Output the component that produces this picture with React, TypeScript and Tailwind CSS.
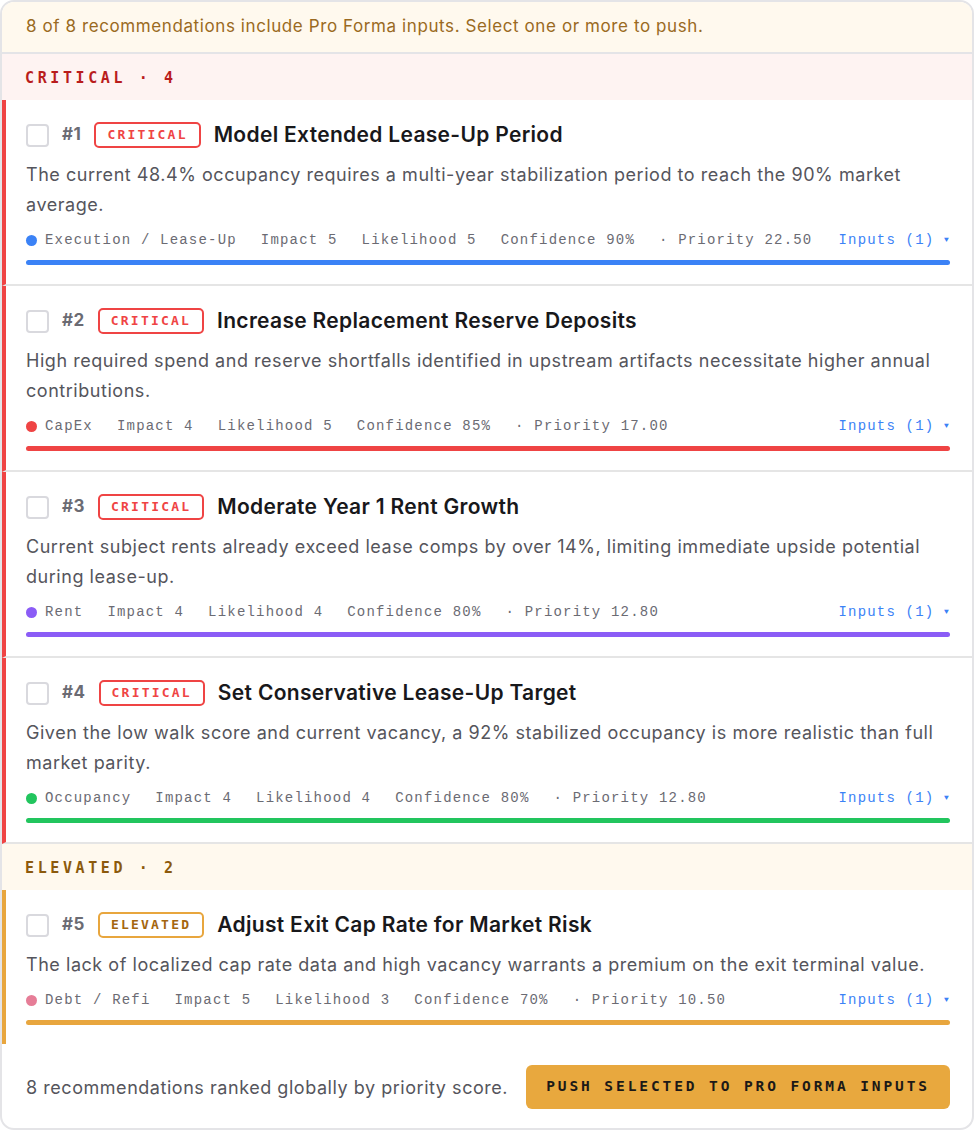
import React from 'react';

const sans = "font-['Inter','Noto_Sans',sans-serif]";
const mono = "font-['Liberation_Mono','DejaVu_Sans_Mono',monospace]";
const monoBold = "font-['DejaVu_Sans_Mono','Liberation_Mono',monospace]";

type Rec = {
  n: number;
  level: 'critical' | 'elevated';
  title: string;
  desc: string;
  category: string;
  dot: string;
  bar: string;
  impact: number;
  likelihood: number;
  confidence: number;
  priority: string;
};

const recs: Rec[] = [
  {
    n: 1,
    level: 'critical',
    title: 'Model Extended Lease-Up Period',
    desc: 'The current 48.4% occupancy requires a multi-year stabilization period to reach the 90% market average.',
    category: 'Execution / Lease-Up',
    dot: 'bg-[#3b82f6]',
    bar: 'bg-[#3b82f6]',
    impact: 5,
    likelihood: 5,
    confidence: 90,
    priority: '22.50',
  },
  {
    n: 2,
    level: 'critical',
    title: 'Increase Replacement Reserve Deposits',
    desc: 'High required spend and reserve shortfalls identified in upstream artifacts necessitate higher annual contributions.',
    category: 'CapEx',
    dot: 'bg-[#ef4444]',
    bar: 'bg-[#ef4444]',
    impact: 4,
    likelihood: 5,
    confidence: 85,
    priority: '17.00',
  },
  {
    n: 3,
    level: 'critical',
    title: 'Moderate Year 1 Rent Growth',
    desc: 'Current subject rents already exceed lease comps by over 14%, limiting immediate upside potential during lease-up.',
    category: 'Rent',
    dot: 'bg-[#8b5cf6]',
    bar: 'bg-[#8b5cf6]',
    impact: 4,
    likelihood: 4,
    confidence: 80,
    priority: '12.80',
  },
  {
    n: 4,
    level: 'critical',
    title: 'Set Conservative Lease-Up Target',
    desc: 'Given the low walk score and current vacancy, a 92% stabilized occupancy is more realistic than full market parity.',
    category: 'Occupancy',
    dot: 'bg-[#22c55e]',
    bar: 'bg-[#22c55e]',
    impact: 4,
    likelihood: 4,
    confidence: 80,
    priority: '12.80',
  },
  {
    n: 5,
    level: 'elevated',
    title: 'Adjust Exit Cap Rate for Market Risk',
    desc: 'The lack of localized cap rate data and high vacancy warrants a premium on the exit terminal value.',
    category: 'Debt / Refi',
    dot: 'bg-[#e67d97]',
    bar: 'bg-[#e8a63e]',
    impact: 5,
    likelihood: 3,
    confidence: 70,
    priority: '10.50',
  },
];

function SectionHeader({ level, count }: { level: 'critical' | 'elevated'; count: number }) {
  const isCrit = level === 'critical';
  return (
    <div
      className={`h-[46px] shrink-0 flex items-center px-[23px] pt-[3px] ${
        isCrit ? 'bg-[#fef3f2] text-[#b91c1c]' : 'bg-[#fff9ee] text-[#8c5a0c]'
      }`}
    >
      <span className={`${monoBold} font-bold text-[15px] tracking-[0.24em]`}>
        {isCrit ? 'CRITICAL' : 'ELEVATED'} · {count}
      </span>
    </div>
  );
}

function RecCard({ rec, last }: { rec: Rec; last?: boolean }) {
  const isCrit = rec.level === 'critical';
  return (
    <div
      className={`border-l-4 ${isCrit ? 'border-l-[#ef4444]' : 'border-l-[#e8a63e]'} ${
        last ? '' : 'border-b-2 border-b-[#e5e5e5]'
      } bg-white pl-5 pr-[22px] pt-[22px] pb-[19px]`}
    >
      <div className="flex items-center gap-[13px] h-[26px]">
        <span className="w-[23px] h-[23px] rounded-[4px] border-2 border-[#d9d9de] bg-white shrink-0" />
        <span className={`${sans} text-[17px] font-bold text-[#6b6b73] tracking-[0.03em]`}>#{rec.n}</span>
        <span
          className={`${monoBold} h-[26px] flex items-center px-[11px] rounded-[5px] border-2 text-[13px] font-bold tracking-[0.17em] ${
            isCrit ? 'border-[#ef4444] text-[#ef4444]' : 'border-[#e8a63e] text-[#a4660f]'
          }`}
        >
          {isCrit ? 'CRITICAL' : 'ELEVATED'}
        </span>
        <span className={`${sans} text-[21px] font-semibold text-[#18181b] tracking-[0.015em]`}>
          {rec.title}
        </span>
      </div>
      <p className={`${sans} mt-3 text-[18px] leading-[30px] text-[#55555c] tracking-[0.03em]`}>{rec.desc}</p>
      <div className={`${mono} mt-[10px] h-5 flex items-center text-[14px] tracking-[0.085em] text-[#6b6b73]`}>
        <span className={`w-[11px] h-[11px] rounded-full ${rec.dot} mr-2 shrink-0`} />
        <span>{rec.category}</span>
        <span className="ml-6">Impact {rec.impact}</span>
        <span className="ml-6">Likelihood {rec.likelihood}</span>
        <span className="ml-6">Confidence {rec.confidence}%</span>
        <span className="ml-6">· Priority {rec.priority}</span>
        <span className="ml-auto text-[#3b82f6]">
          Inputs (1) <span className="text-[8px] align-middle">▼</span>
        </span>
      </div>
      <div className={`mt-[10px] h-[5px] rounded-full ${rec.bar}`} />
    </div>
  );
}

export default function App() {
  return (
    <div className="w-[974px] h-[1130px] bg-white">
      <div className="h-full border-2 border-[#e4e4e7] rounded-[14px] overflow-hidden flex flex-col">
        <div className={`${sans} h-[52px] shrink-0 flex items-center px-6 bg-[#fff9ee] text-[#9a6a22] text-[17px] tracking-[0.035em] border-b-2 border-[#e4e4e7]`}>
          8 of 8 recommendations include Pro Forma inputs. Select one or more to push.
        </div>
        <SectionHeader level="critical" count={4} />
        {recs.slice(0, 4).map(r => (
          <RecCard key={r.n} rec={r} />
        ))}
        <SectionHeader level="elevated" count={2} />
        <RecCard rec={recs[4]} last />
        <div className="flex items-center justify-between pl-6 pr-[22px] pt-[21px] pb-[18px]">
          <span className={`${sans} text-[18px] text-[#55555c] tracking-[0.03em]`}>
            8 recommendations ranked globally by priority score.
          </span>
          <button
            className={`${monoBold} h-[44px] px-[20px] rounded-[6px] bg-[#e8a83e] text-[#1c1917] text-[14.5px] font-bold tracking-[0.2em]`}
          >
            PUSH SELECTED TO PRO FORMA INPUTS
          </button>
        </div>
      </div>
    </div>
  );
}
